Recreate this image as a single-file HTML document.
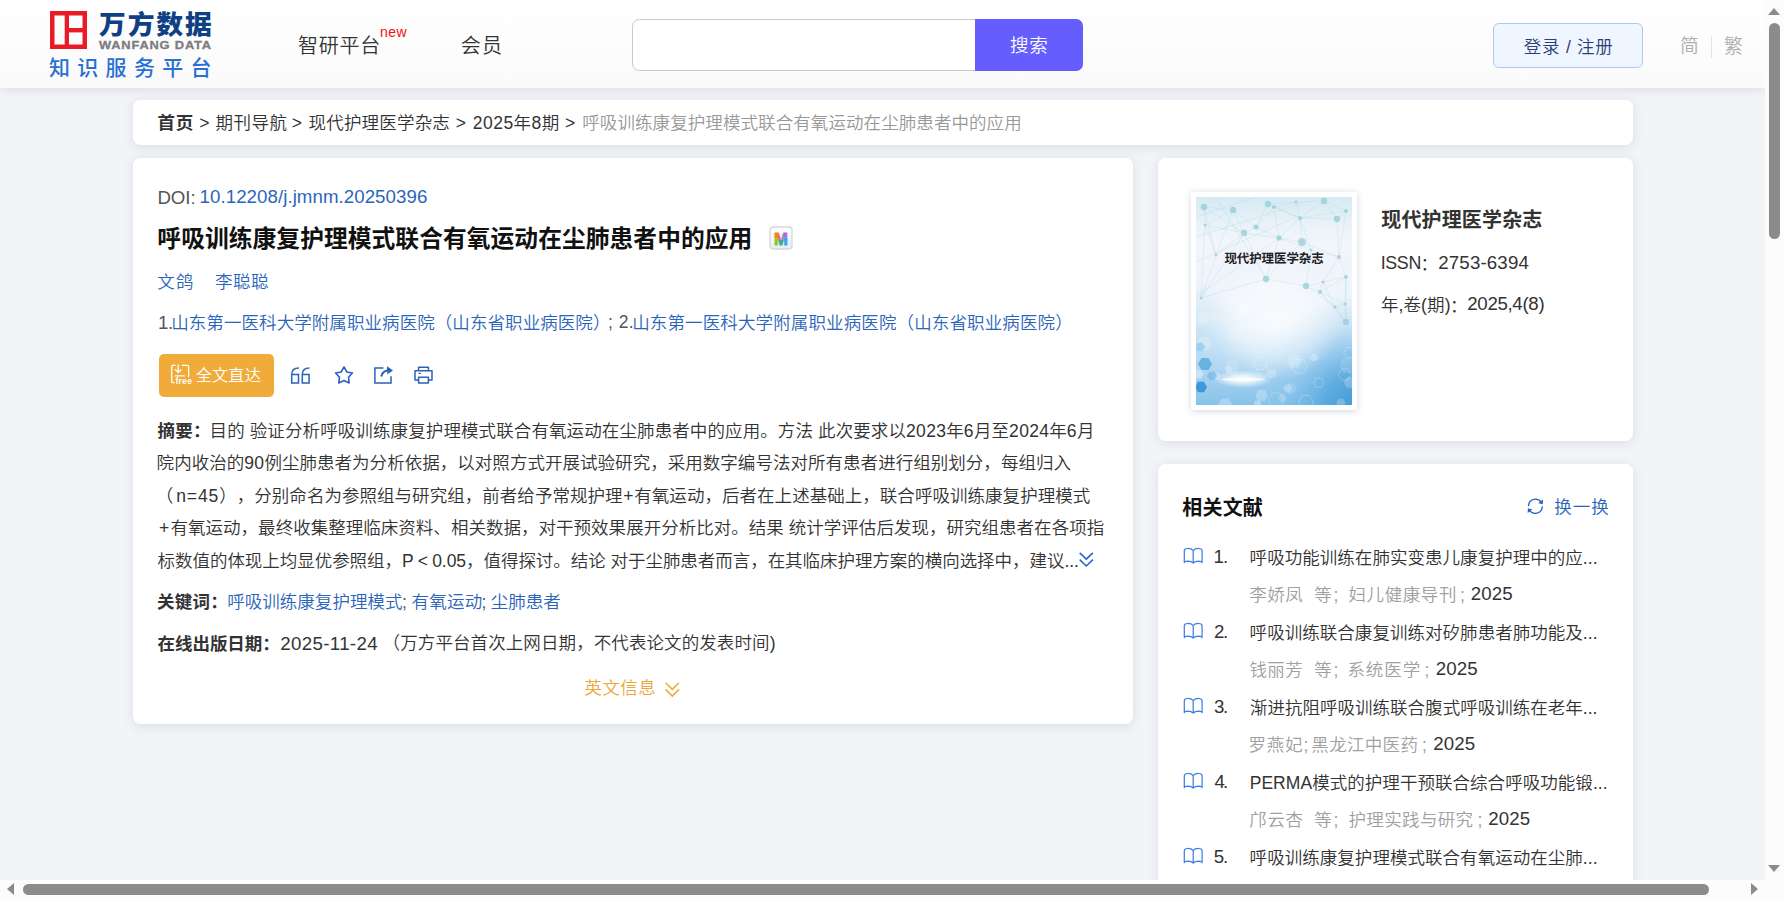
<!DOCTYPE html>
<html lang="zh-CN">
<head>
<meta charset="utf-8">
<title>呼吸训练康复护理模式联合有氧运动在尘肺患者中的应用</title>
<style>
*{box-sizing:border-box;margin:0;padding:0}
html,body{width:1784px;height:899px;overflow:hidden}
body{position:relative;background:#f2f4f8;font-family:"Liberation Sans","Noto Sans CJK SC",sans-serif;color:#333;font-size:17.5px;font-weight:350;text-spacing-trim:space-all}
a{text-decoration:none;color:inherit}
i{font-style:normal}
.abs{position:absolute}
.t{position:absolute;white-space:nowrap;display:block}
.d{letter-spacing:.3px}
/* header */
#hdr{position:absolute;left:0;top:0;width:1765px;height:88px;background:linear-gradient(#fff,#fafafa);box-shadow:0 1px 10px rgba(40,45,60,.13)}
#logo-sq{position:absolute;left:50px;top:11px;width:37px;height:38px}
#logo-cn{position:absolute;left:99px;top:2.6px;font-size:26px;line-height:44px;font-weight:900;color:#0f4083;letter-spacing:1.8px;white-space:nowrap;transform-origin:0 50%;transform:scaleX(1.03)}
#logo-en{position:absolute;left:99px;top:38px;font-size:11.3px;line-height:14px;font-weight:700;color:#7c7d81;letter-spacing:.7px;white-space:nowrap;transform-origin:0 50%;transform:scaleX(1.14);-webkit-text-stroke:.3px #7c7d81}
#logo-sub{position:absolute;left:49px;top:54px;font-size:21px;line-height:28px;font-weight:500;color:#2a6fd3;letter-spacing:7.3px;white-space:nowrap}
#sbox{position:absolute;left:632px;top:19px;width:451px;height:52px;border:1px solid #c9c9c9;border-radius:7.5px;background:#fff}
#sbtn{position:absolute;left:975px;top:19px;width:108px;height:52px;border-radius:0 7px 7px 0;background:#665dff}
#login{position:absolute;left:1493px;top:23px;width:150px;height:45px;border:1px solid #afc8ef;border-radius:6px;background:#f0f6ff}
#langsep{position:absolute;left:1711px;top:36px;width:1px;height:22px;background:#e4e4e4}
/* cards */
.card{position:absolute;background:#fff;border-radius:7.5px;box-shadow:0 2px 12px rgba(30,40,50,.115)}
#crumb{left:133px;top:100px;width:1500px;height:45px}
#main{left:133px;top:158px;width:1000px;height:566px}
#side1{left:1158px;top:158px;width:475px;height:283px}
#side2{left:1158px;top:464px;width:475px;height:440px}
/* scrollbars */
#vsb{position:absolute;left:1765px;top:0;width:19px;height:880px;background:#fcfcfc}
#hsb{position:absolute;left:0;top:880px;width:1784px;height:19px;background:#fcfcfc}
.thumb{position:absolute;background:#8b8b8b;border-radius:6px}
.tri{position:absolute;width:0;height:0}
</style>
</head>
<body>
<div id="hdr">
  <svg id="logo-sq" viewBox="0 0 37 38"><rect x="2.25" y="2.25" width="32.5" height="33.5" fill="none" stroke="#e81c26" stroke-width="4.5"/><rect x="14.7" y="2" width="4.3" height="34" fill="#e81c26"/><rect x="17" y="17" width="17" height="4.4" fill="#e81c26"/></svg>
  <div id="logo-cn">万方数据</div>
  <div id="logo-en">WANFANG DATA</div>
  <div id="logo-sub">知识服务平台</div>
  <div id="sbox"></div>
  <div id="sbtn"></div>
  <div id="login"></div>
  <div id="langsep"></div>
</div>
<div class="card" id="crumb"></div>
<div class="card" id="main"></div>
<div class="card" id="side1"></div>
<div class="card" id="side2"></div>

<!-- cover -->
<div class="abs" style="left:1158px;top:158px"><div class="abs" id="cover" style="left:33px;top:34px;width:166px;height:218px;background:#fff;box-shadow:0 1px 7px rgba(110,130,160,.32)"><svg class="abs" style="left:5px;top:5px" width="156" height="208" viewBox="0 0 156 208"><defs>
<linearGradient id="cg1" x1="0" y1="0" x2="0" y2="1"><stop offset="0" stop-color="#eaf2f9"/><stop offset=".12" stop-color="#f3f6fb"/><stop offset=".5" stop-color="#eef4fb"/><stop offset=".62" stop-color="#e2eff9"/><stop offset=".76" stop-color="#c2e0f5"/><stop offset=".9" stop-color="#9ccdee"/><stop offset="1" stop-color="#86c3ea"/></linearGradient>
<radialGradient id="cg2" cx=".5" cy=".5" r=".5"><stop offset="0" stop-color="#ffffff" stop-opacity=".75"/><stop offset=".6" stop-color="#ffffff" stop-opacity=".38"/><stop offset="1" stop-color="#ffffff" stop-opacity="0"/></radialGradient>
<radialGradient id="cg3" cx=".5" cy=".5" r=".5"><stop offset="0" stop-color="#ffffff" stop-opacity="1"/><stop offset=".4" stop-color="#ffffff" stop-opacity=".7"/><stop offset="1" stop-color="#ffffff" stop-opacity="0"/></radialGradient>
<radialGradient id="cg5" gradientUnits="userSpaceOnUse" cx="170" cy="215" r="120"><stop offset="0" stop-color="#3a94d3" stop-opacity="1"/><stop offset=".35" stop-color="#4ea3dc" stop-opacity=".8"/><stop offset=".7" stop-color="#7dbde8" stop-opacity=".3"/><stop offset="1" stop-color="#8cc6ea" stop-opacity="0"/></radialGradient>
<radialGradient id="cg6" gradientUnits="userSpaceOnUse" cx="-15" cy="140" r="60"><stop offset="0" stop-color="#9fd0ee" stop-opacity=".45"/><stop offset="1" stop-color="#9fd0ee" stop-opacity="0"/></radialGradient>
<linearGradient id="cg4" x1="0" y1="0" x2="0" y2="1"><stop offset="0" stop-color="#c6e4ee" stop-opacity=".55"/><stop offset="1" stop-color="#c6e4ee" stop-opacity="0"/></linearGradient>
</defs><rect width="156" height="208" fill="url(#cg1)"/><rect width="156" height="208" fill="url(#cg5)"/><rect width="156" height="208" fill="url(#cg6)"/><rect width="156" height="45" fill="url(#cg4)"/><ellipse cx="80" cy="124" rx="66" ry="58" fill="url(#cg2)"/><line x1="8" y1="10" x2="37" y2="13" stroke="#a5d3dd" stroke-width=".6" opacity=".42"/><line x1="8" y1="10" x2="9" y2="28" stroke="#a5d3dd" stroke-width=".6" opacity=".42"/><line x1="8" y1="10" x2="48" y2="36" stroke="#a5d3dd" stroke-width=".6" opacity=".42"/><line x1="8" y1="10" x2="20" y2="58" stroke="#a5d3dd" stroke-width=".6" opacity=".42"/><line x1="37" y1="13" x2="9" y2="28" stroke="#a5d3dd" stroke-width=".6" opacity=".42"/><line x1="37" y1="13" x2="48" y2="36" stroke="#a5d3dd" stroke-width=".6" opacity=".42"/><line x1="37" y1="13" x2="20" y2="58" stroke="#a5d3dd" stroke-width=".6" opacity=".42"/><line x1="37" y1="13" x2="60" y2="30" stroke="#a5d3dd" stroke-width=".6" opacity=".42"/><line x1="72" y1="7" x2="78" y2="10" stroke="#a5d3dd" stroke-width=".6" opacity=".42"/><line x1="72" y1="7" x2="104" y2="21" stroke="#a5d3dd" stroke-width=".6" opacity=".42"/><line x1="72" y1="7" x2="100" y2="5" stroke="#a5d3dd" stroke-width=".6" opacity=".42"/><line x1="72" y1="7" x2="60" y2="30" stroke="#a5d3dd" stroke-width=".6" opacity=".42"/><line x1="78" y1="10" x2="104" y2="21" stroke="#a5d3dd" stroke-width=".6" opacity=".42"/><line x1="78" y1="10" x2="83" y2="41" stroke="#a5d3dd" stroke-width=".6" opacity=".42"/><line x1="78" y1="10" x2="100" y2="5" stroke="#a5d3dd" stroke-width=".6" opacity=".42"/><line x1="78" y1="10" x2="60" y2="30" stroke="#a5d3dd" stroke-width=".6" opacity=".42"/><line x1="104" y1="21" x2="141" y2="22" stroke="#a5d3dd" stroke-width=".6" opacity=".42"/><line x1="104" y1="21" x2="150" y2="14" stroke="#a5d3dd" stroke-width=".6" opacity=".42"/><line x1="104" y1="21" x2="83" y2="41" stroke="#a5d3dd" stroke-width=".6" opacity=".42"/><line x1="104" y1="21" x2="106" y2="45" stroke="#a5d3dd" stroke-width=".6" opacity=".42"/><line x1="104" y1="21" x2="115" y2="53" stroke="#a5d3dd" stroke-width=".6" opacity=".42"/><line x1="104" y1="21" x2="100" y2="5" stroke="#a5d3dd" stroke-width=".6" opacity=".42"/><line x1="104" y1="21" x2="128" y2="4" stroke="#a5d3dd" stroke-width=".6" opacity=".42"/><line x1="141" y1="22" x2="150" y2="14" stroke="#a5d3dd" stroke-width=".6" opacity=".42"/><line x1="141" y1="22" x2="143" y2="60" stroke="#a5d3dd" stroke-width=".6" opacity=".42"/><line x1="141" y1="22" x2="128" y2="4" stroke="#a5d3dd" stroke-width=".6" opacity=".42"/><line x1="150" y1="14" x2="143" y2="60" stroke="#a5d3dd" stroke-width=".6" opacity=".42"/><line x1="150" y1="14" x2="128" y2="4" stroke="#a5d3dd" stroke-width=".6" opacity=".42"/><line x1="9" y1="28" x2="48" y2="36" stroke="#a5d3dd" stroke-width=".6" opacity=".42"/><line x1="9" y1="28" x2="20" y2="58" stroke="#a5d3dd" stroke-width=".6" opacity=".42"/><line x1="9" y1="28" x2="5" y2="101" stroke="#a5d3dd" stroke-width=".6" opacity=".42"/><line x1="48" y1="36" x2="83" y2="41" stroke="#a5d3dd" stroke-width=".6" opacity=".42"/><line x1="48" y1="36" x2="20" y2="58" stroke="#a5d3dd" stroke-width=".6" opacity=".42"/><line x1="48" y1="36" x2="70" y2="82" stroke="#a5d3dd" stroke-width=".6" opacity=".42"/><line x1="48" y1="36" x2="5" y2="101" stroke="#a5d3dd" stroke-width=".6" opacity=".42"/><line x1="48" y1="36" x2="60" y2="30" stroke="#a5d3dd" stroke-width=".6" opacity=".42"/><line x1="83" y1="41" x2="106" y2="45" stroke="#a5d3dd" stroke-width=".6" opacity=".42"/><line x1="83" y1="41" x2="115" y2="53" stroke="#a5d3dd" stroke-width=".6" opacity=".42"/><line x1="83" y1="41" x2="70" y2="82" stroke="#a5d3dd" stroke-width=".6" opacity=".42"/><line x1="83" y1="41" x2="60" y2="30" stroke="#a5d3dd" stroke-width=".6" opacity=".42"/><line x1="106" y1="45" x2="115" y2="53" stroke="#a5d3dd" stroke-width=".6" opacity=".42"/><line x1="106" y1="45" x2="70" y2="82" stroke="#a5d3dd" stroke-width=".6" opacity=".42"/><line x1="106" y1="45" x2="143" y2="60" stroke="#a5d3dd" stroke-width=".6" opacity=".42"/><line x1="115" y1="53" x2="110" y2="89" stroke="#a5d3dd" stroke-width=".6" opacity=".42"/><line x1="115" y1="53" x2="143" y2="60" stroke="#a5d3dd" stroke-width=".6" opacity=".42"/><line x1="20" y1="58" x2="5" y2="101" stroke="#a5d3dd" stroke-width=".6" opacity=".42"/><line x1="70" y1="82" x2="110" y2="89" stroke="#a5d3dd" stroke-width=".6" opacity=".42"/><line x1="70" y1="82" x2="5" y2="101" stroke="#a5d3dd" stroke-width=".6" opacity=".42"/><line x1="110" y1="89" x2="124" y2="95" stroke="#a5d3dd" stroke-width=".6" opacity=".42"/><line x1="110" y1="89" x2="127" y2="85" stroke="#a5d3dd" stroke-width=".6" opacity=".42"/><line x1="110" y1="89" x2="139" y2="110" stroke="#a5d3dd" stroke-width=".6" opacity=".42"/><line x1="124" y1="95" x2="127" y2="85" stroke="#a5d3dd" stroke-width=".6" opacity=".42"/><line x1="124" y1="95" x2="139" y2="110" stroke="#a5d3dd" stroke-width=".6" opacity=".42"/><line x1="124" y1="95" x2="149" y2="107" stroke="#a5d3dd" stroke-width=".6" opacity=".42"/><line x1="124" y1="95" x2="150" y2="80" stroke="#a5d3dd" stroke-width=".6" opacity=".42"/><line x1="124" y1="95" x2="150" y2="125" stroke="#a5d3dd" stroke-width=".6" opacity=".42"/><line x1="127" y1="85" x2="139" y2="110" stroke="#a5d3dd" stroke-width=".6" opacity=".42"/><line x1="127" y1="85" x2="143" y2="60" stroke="#a5d3dd" stroke-width=".6" opacity=".42"/><line x1="127" y1="85" x2="150" y2="80" stroke="#a5d3dd" stroke-width=".6" opacity=".42"/><line x1="139" y1="110" x2="149" y2="107" stroke="#a5d3dd" stroke-width=".6" opacity=".42"/><line x1="139" y1="110" x2="150" y2="125" stroke="#a5d3dd" stroke-width=".6" opacity=".42"/><line x1="149" y1="107" x2="150" y2="80" stroke="#a5d3dd" stroke-width=".6" opacity=".42"/><line x1="149" y1="107" x2="150" y2="125" stroke="#a5d3dd" stroke-width=".6" opacity=".42"/><line x1="143" y1="60" x2="150" y2="80" stroke="#a5d3dd" stroke-width=".6" opacity=".42"/><line x1="150" y1="80" x2="150" y2="125" stroke="#a5d3dd" stroke-width=".6" opacity=".42"/><line x1="100" y1="5" x2="128" y2="4" stroke="#a5d3dd" stroke-width=".6" opacity=".42"/><line x1="0" y1="40" x2="110" y2="5" stroke="#a5d3dd" stroke-width=".6" opacity=".42"/><line x1="0" y1="65" x2="100" y2="20" stroke="#a5d3dd" stroke-width=".6" opacity=".42"/><line x1="0" y1="100" x2="83" y2="41" stroke="#a5d3dd" stroke-width=".6" opacity=".42"/><line x1="0" y1="20" x2="60" y2="0" stroke="#a5d3dd" stroke-width=".6" opacity=".42"/><line x1="20" y1="0" x2="70" y2="82" stroke="#a5d3dd" stroke-width=".6" opacity=".42"/><circle cx="8" cy="10" r="3.2" fill="#97cfd9" opacity=".8"/><circle cx="37" cy="13" r="3.2" fill="#97cfd9" opacity=".8"/><circle cx="72" cy="7" r="3.2" fill="#97cfd9" opacity=".8"/><circle cx="78" cy="10" r="2" fill="#97cfd9" opacity=".8"/><circle cx="104" cy="21" r="2" fill="#97cfd9" opacity=".8"/><circle cx="141" cy="22" r="3.2" fill="#97cfd9" opacity=".8"/><circle cx="150" cy="14" r="2" fill="#97cfd9" opacity=".8"/><circle cx="9" cy="28" r="1.5" fill="#97cfd9" opacity=".8"/><circle cx="48" cy="36" r="3.2" fill="#97cfd9" opacity=".8"/><circle cx="83" cy="41" r="2.6" fill="#97cfd9" opacity=".8"/><circle cx="106" cy="45" r="2" fill="#97cfd9" opacity=".8"/><circle cx="115" cy="53" r="1.5" fill="#97cfd9" opacity=".8"/><circle cx="20" cy="58" r="1.5" fill="#97cfd9" opacity=".8"/><circle cx="70" cy="82" r="3.2" fill="#97cfd9" opacity=".8"/><circle cx="110" cy="89" r="3.2" fill="#97cfd9" opacity=".8"/><circle cx="124" cy="95" r="2" fill="#97cfd9" opacity=".8"/><circle cx="127" cy="85" r="1.5" fill="#97cfd9" opacity=".8"/><circle cx="5" cy="101" r="1.5" fill="#97cfd9" opacity=".8"/><circle cx="139" cy="110" r="1.5" fill="#97cfd9" opacity=".8"/><circle cx="149" cy="107" r="1.5" fill="#97cfd9" opacity=".8"/><circle cx="143" cy="60" r="2" fill="#97cfd9" opacity=".8"/><circle cx="150" cy="80" r="2" fill="#97cfd9" opacity=".8"/><circle cx="100" cy="5" r="1.5" fill="#97cfd9" opacity=".8"/><circle cx="128" cy="4" r="3.2" fill="#97cfd9" opacity=".8"/><circle cx="60" cy="30" r="2.6" fill="#97cfd9" opacity=".8"/><circle cx="150" cy="125" r="3.2" fill="#97cfd9" opacity=".8"/><circle cx="106" cy="45" r="4.2" fill="#a5d6de" opacity=".85"/><polygon points="40.5,138.8 38.5,142.3 34.4,142.3 32.4,138.8 34.4,135.3 38.5,135.3" fill="#ffffff" opacity="0.14"/><polygon points="90.4,201.3 88.2,205.1 83.8,205.1 81.6,201.3 83.8,197.5 88.2,197.5" fill="#ffffff" opacity="0.19"/><polygon points="122.4,160.3 120.3,163.9 116.2,163.9 114.1,160.3 116.2,156.7 120.3,156.7" fill="#ffffff" opacity="0.27"/><polygon points="22.3,120.6 19.6,125.3 14.1,125.3 11.4,120.6 14.1,115.8 19.6,115.8" fill="#ffffff" opacity="0.14"/><polygon points="7.7,177.1 5.2,181.5 0.1,181.5 -2.4,177.1 0.1,172.7 5.2,172.7" fill="#ffffff" opacity="0.36"/><polygon points="15.7,146.8 11.9,153.3 4.4,153.3 0.6,146.8 4.4,140.3 11.9,140.3" fill="#ffffff" opacity="0.23"/><polygon points="54.6,111.5 51.6,116.7 45.5,116.7 42.5,111.5 45.5,106.2 51.6,106.2" fill="#ffffff" opacity="0.36"/><polygon points="25.1,179.3 23.0,182.8 19.0,182.8 16.9,179.3 19.0,175.8 23.0,175.8" fill="#ffffff" opacity="0.24"/><polygon points="80.9,176.8 78.4,181.1 73.5,181.1 71.0,176.8 73.5,172.6 78.4,172.6" fill="#ffffff" opacity="0.25"/><polygon points="159.8,185.4 156.8,190.7 150.7,190.7 147.6,185.4 150.7,180.1 156.8,180.1" fill="#ffffff" opacity="0.22"/><polygon points="65.6,207.0 63.6,210.5 59.6,210.5 57.6,207.0 59.6,203.6 63.6,203.6" fill="#ffffff" opacity="0.34"/><polygon points="161.1,168.1 156.6,175.9 147.6,175.9 143.1,168.1 147.6,160.3 156.6,160.3" fill="#ffffff" opacity="0.13"/><polygon points="36.2,207.6 32.7,213.7 25.7,213.7 22.2,207.6 25.7,201.5 32.7,201.5" fill="#ffffff" opacity="0.27"/><polygon points="12.8,124.3 9.7,129.7 3.5,129.7 0.4,124.3 3.5,119.0 9.7,119.0" fill="#ffffff" opacity="0.12"/><polygon points="101.1,191.4 98.2,196.5 92.2,196.5 89.3,191.4 92.2,186.2 98.2,186.2" fill="#ffffff" opacity="0.14"/><polygon points="36.6,172.4 34.6,175.9 30.5,175.9 28.5,172.4 30.5,168.9 34.6,168.9" fill="#ffffff" opacity="0.22"/><polygon points="96.3,191.6 94.0,195.6 89.3,195.6 86.9,191.6 89.3,187.5 94.0,187.5" fill="#ffffff" opacity="0.22"/><polygon points="43.3,169.8 39.4,176.4 31.8,176.4 28.0,169.8 31.8,163.2 39.4,163.2" fill="#ffffff" opacity="0.16"/><polygon points="105.6,164.3 101.8,170.7 94.4,170.7 90.7,164.3 94.4,157.8 101.8,157.8" fill="#ffffff" opacity="0.22"/><polygon points="14.0,120.7 10.7,126.4 4.1,126.4 0.8,120.7 4.1,115.0 10.7,115.0" fill="#ffffff" opacity="0.19"/><polygon points="72.1,198.7 68.9,204.3 62.4,204.3 59.2,198.7 62.4,193.1 68.9,193.1" fill="#ffffff" opacity="0.26"/><polygon points="149.6,205.8 147.3,209.8 142.6,209.8 140.3,205.8 142.6,201.8 147.3,201.8" fill="#ffffff" opacity="0.24"/><polygon points="128.0,185.7 125.4,190.3 120.1,190.3 117.4,185.7 120.1,181.1 125.4,181.1" fill="none" stroke="#ffffff" stroke-width=".7" opacity=".35"/><polygon points="88.4,203.1 84.4,210.0 76.4,210.0 72.4,203.1 76.4,196.1 84.4,196.1" fill="none" stroke="#ffffff" stroke-width=".7" opacity=".35"/><polygon points="72.6,173.9 69.6,179.1 63.6,179.1 60.6,173.9 63.6,168.7 69.6,168.7" fill="none" stroke="#ffffff" stroke-width=".7" opacity=".35"/><polygon points="71.6,166.4 68.0,172.5 60.9,172.5 57.3,166.4 60.9,160.2 68.0,160.2" fill="none" stroke="#ffffff" stroke-width=".7" opacity=".35"/><polygon points="159.0,155.3 156.2,160.2 150.6,160.2 147.9,155.3 150.6,150.5 156.2,150.5" fill="none" stroke="#ffffff" stroke-width=".7" opacity=".35"/><polygon points="111.2,169.2 107.2,176.1 99.3,176.1 95.3,169.2 99.3,162.3 107.2,162.3" fill="none" stroke="#ffffff" stroke-width=".7" opacity=".35"/><polygon points="117.5,204.9 113.8,211.3 106.4,211.3 102.7,204.9 106.4,198.5 113.8,198.5" fill="none" stroke="#ffffff" stroke-width=".7" opacity=".35"/><polygon points="155.1,177.5 151.9,183.1 145.4,183.1 142.2,177.5 145.4,172.0 151.9,172.0" fill="none" stroke="#ffffff" stroke-width=".7" opacity=".35"/><polygon points="11.0,190.0 8.0,195.2 2.0,195.2 -1.0,190.0 2.0,184.8 8.0,184.8" fill="#2f8fd4" opacity="0.85"/><polygon points="16.0,167.0 12.5,173.1 5.5,173.1 2.0,167.0 5.5,160.9 12.5,160.9" fill="#4aa4dd" opacity="0.7"/><polygon points="9.0,150.0 6.5,154.3 1.5,154.3 -1.0,150.0 1.5,145.7 6.5,145.7" fill="#8fc8ec" opacity="0.7"/><polygon points="21.0,179.0 18.5,183.3 13.5,183.3 11.0,179.0 13.5,174.7 18.5,174.7" fill="#6db6e6" opacity="0.6"/><ellipse cx="47" cy="182" rx="30" ry="9" fill="url(#cg3)"/><ellipse cx="47" cy="182.5" rx="22" ry="1.6" fill="#fff" opacity=".75"/><text x="78" y="65.8" text-anchor="middle" font-family="Liberation Sans, Noto Sans CJK SC, sans-serif" font-weight="700" font-size="12.5" fill="#222" letter-spacing="-.1">现代护理医学杂志</text></svg></div></div>

<!-- M icon -->
<svg class="abs" id="micon" style="left:769px;top:226px" width="24" height="24" viewBox="0 0 24 24">
  <defs>
    <linearGradient id="mbg" x1="0" y1="0" x2="0" y2="1"><stop offset="0" stop-color="#ffffff"/><stop offset="1" stop-color="#e4edf9"/></linearGradient>
    <pattern id="mfg" patternUnits="userSpaceOnUse" x="0" y="0" width="24" height="24">
      <rect x="0" y="0" width="9.2" height="12.6" fill="#f7821d"/><rect x="0" y="12.6" width="9.2" height="12" fill="#8cc82c"/>
      <rect x="9.2" y="0" width="3.2" height="13.5" fill="#e8604a"/><rect x="9.2" y="13.5" width="5.6" height="11" fill="#4aa58c"/>
      <rect x="12.4" y="0" width="2.4" height="13.5" fill="#9a7fc0"/>
      <rect x="14.8" y="0" width="10" height="11.6" fill="#b266da"/><rect x="14.8" y="11.6" width="10" height="13" fill="#3f9fe8"/>
    </pattern>
  </defs>
  <rect x="1" y="1" width="22" height="22" rx="3.2" fill="url(#mbg)" stroke="#d6d6d6" stroke-width="1.3"/>
  <text x="12" y="18.7" text-anchor="middle" font-family="Liberation Sans, sans-serif" font-weight="700" font-size="16.6" fill="url(#mfg)" stroke="url(#mfg)" stroke-width="1" stroke-linejoin="round">M</text>
</svg>

<!-- full text button -->
<div class="abs" id="ftbtn" style="left:159px;top:354px;width:115px;height:43px;border-radius:5px;background:#f0ab3a"></div>
<!--ICONS--><svg class="abs" style="left:170px;top:364px" width="24" height="22" viewBox="170 364 24 22"><g fill="none" stroke="#fff" stroke-width="1.3" stroke-linecap="round" stroke-linejoin="round"><path d="M175.1 365.4 H172.9 Q171.7 365.4 171.7 366.6 V381.4 Q171.7 382.6 172.9 382.6 H174"/><path d="M182.2 365.4 H187.4 Q188.6 365.4 188.6 366.6 V376.4"/><path d="M178.2 365.2 V372.3 M175.4 369.8 L178.2 372.6 L181 369.8"/><path d="M175.3 375.9 H184.2"/></g><text x="175.4" y="384" font-family="Liberation Sans, sans-serif" font-weight="700" font-size="8.6" fill="#fff" letter-spacing=".25">free</text></svg>
<svg class="abs" style="left:289px;top:365px" width="23" height="21" viewBox="289 365 23 21"><g fill="none" stroke="#2a62ba" stroke-width="1.5" stroke-linejoin="miter"><path d="M298.9 367.9 Q291.7 367.9 291.7 374.6 V382.9 H298.5 V374.6 H291.7"/><path d="M309.5 367.9 Q302.3 367.9 302.3 374.6 V382.9 H309.1 V374.6 H302.3"/></g></svg>
<svg class="abs" style="left:333px;top:364px" width="22" height="22" viewBox="333 364 22 22"><polygon points="344.00,367.00 346.82,371.92 352.37,373.08 348.57,377.28 349.17,382.92 344.00,380.60 338.83,382.92 339.43,377.28 335.63,373.08 341.18,371.92" fill="none" stroke="#2a62ba" stroke-width="1.6" stroke-linejoin="round"/></svg>
<svg class="abs" style="left:372px;top:364px" width="23" height="22" viewBox="372 364 23 22"><g fill="none" stroke="#2a62ba" stroke-width="1.5" stroke-linejoin="miter"><path d="M383.4 367.9 H374.9 V383 H391 V376.3"/><path d="M381.5 375.8 Q382.9 370.8 388 370.5" stroke-width="2" stroke-linecap="round"/></g><path d="M387 366.2 L393 370.5 L387 374.6 L387.6 371.6 L386.9 369.4 Z" fill="#2a62ba"/></svg>
<svg class="abs" style="left:413px;top:365px" width="22" height="21" viewBox="413 365 22 21"><g fill="none" stroke="#2a62ba" stroke-width="1.5" stroke-linejoin="round"><path d="M418.6 370.6 V367.2 H428.4 V370.6"/><path d="M418.6 380 H415 V370.8 H432 V380 H428.4"/><rect x="418.6" y="377.2" width="9.8" height="5.8" fill="#fff"/></g><rect x="418.4" y="372.8" width="2.4" height="1.2" fill="#2a62ba"/></svg>
<svg class="abs" style="left:1078px;top:551px" width="17" height="17" viewBox="1078 551 17 17"><g fill="none" stroke="#2a66c4" stroke-width="1.6"><path d="M1079.7 552.9 L1086.3 559.2 L1092.9 552.9"/><path d="M1079.7 559.7 L1086.3 566 L1092.9 559.7"/></g></svg>
<svg class="abs" style="left:664px;top:681px" width="17" height="17" viewBox="664 681 17 17"><g fill="none" stroke="#eeaa3c" stroke-width="1.5"><path d="M665.6 682.7 L672.3 689.4 L679 682.7"/><path d="M665.6 689.4 L672.3 696.1 L679 689.4"/></g></svg>
<svg class="abs" style="left:1526px;top:497px" width="19" height="19" viewBox="1526 497 19 19"><g fill="none" stroke="#2a62ba" stroke-width="1.35" stroke-linecap="round"><path d="M1528.5 505.6 A6.9 6.9 0 0 1 1541.3 502.6"/><path d="M1542.2 507 A6.9 6.9 0 0 1 1529.4 510"/></g><path d="M1543 499.6 L1542.8 504.3 L1538.4 503.2 Z" fill="#2a62ba"/><path d="M1527.7 513 L1527.9 508.3 L1532.3 509.4 Z" fill="#2a62ba"/></svg>
<svg class="abs" style="left:1182px;top:546px" width="23" height="20" viewBox="1182 546 23 20"><path d="M1184.3 562.6 V551 Q1184.3 548.6 1187.6 548.5 Q1191.5 548.4 1193.2 550.6 Q1194.9 548.4 1198.8 548.5 Q1202.1 548.6 1202.1 551 V562.6 Q1202 561.2 1198.4 561.1 Q1195 561.1 1193.2 563 Q1191.4 561.1 1188 561.1 Q1184.4 561.2 1184.3 562.6 Z M1193.2 550.6 V562.8" fill="none" stroke="#3f80e2" stroke-width="1.25" stroke-linejoin="round"/></svg>
<svg class="abs" style="left:1182px;top:621px" width="23" height="20" viewBox="1182 546 23 20"><path d="M1184.3 562.6 V551 Q1184.3 548.6 1187.6 548.5 Q1191.5 548.4 1193.2 550.6 Q1194.9 548.4 1198.8 548.5 Q1202.1 548.6 1202.1 551 V562.6 Q1202 561.2 1198.4 561.1 Q1195 561.1 1193.2 563 Q1191.4 561.1 1188 561.1 Q1184.4 561.2 1184.3 562.6 Z M1193.2 550.6 V562.8" fill="none" stroke="#3f80e2" stroke-width="1.25" stroke-linejoin="round"/></svg>
<svg class="abs" style="left:1182px;top:696px" width="23" height="20" viewBox="1182 546 23 20"><path d="M1184.3 562.6 V551 Q1184.3 548.6 1187.6 548.5 Q1191.5 548.4 1193.2 550.6 Q1194.9 548.4 1198.8 548.5 Q1202.1 548.6 1202.1 551 V562.6 Q1202 561.2 1198.4 561.1 Q1195 561.1 1193.2 563 Q1191.4 561.1 1188 561.1 Q1184.4 561.2 1184.3 562.6 Z M1193.2 550.6 V562.8" fill="none" stroke="#3f80e2" stroke-width="1.25" stroke-linejoin="round"/></svg>
<svg class="abs" style="left:1182px;top:771px" width="23" height="20" viewBox="1182 546 23 20"><path d="M1184.3 562.6 V551 Q1184.3 548.6 1187.6 548.5 Q1191.5 548.4 1193.2 550.6 Q1194.9 548.4 1198.8 548.5 Q1202.1 548.6 1202.1 551 V562.6 Q1202 561.2 1198.4 561.1 Q1195 561.1 1193.2 563 Q1191.4 561.1 1188 561.1 Q1184.4 561.2 1184.3 562.6 Z M1193.2 550.6 V562.8" fill="none" stroke="#3f80e2" stroke-width="1.25" stroke-linejoin="round"/></svg>
<svg class="abs" style="left:1182px;top:846px" width="23" height="20" viewBox="1182 546 23 20"><path d="M1184.3 562.6 V551 Q1184.3 548.6 1187.6 548.5 Q1191.5 548.4 1193.2 550.6 Q1194.9 548.4 1198.8 548.5 Q1202.1 548.6 1202.1 551 V562.6 Q1202 561.2 1198.4 561.1 Q1195 561.1 1193.2 563 Q1191.4 561.1 1188 561.1 Q1184.4 561.2 1184.3 562.6 Z M1193.2 550.6 V562.8" fill="none" stroke="#3f80e2" stroke-width="1.25" stroke-linejoin="round"/></svg><!--/ICONS-->

<span class="t" id="n1" style="left:297.96px;top:30.00px;font-size:20px;line-height:32.0px;color:#333;letter-spacing:0.752px;">智研平台</span>
<span class="t" id="nw" style="left:380.00px;top:21.00px;font-size:14px;line-height:22.4px;color:#f50f0f;letter-spacing:0.413px;">new</span>
<span class="t" id="n2" style="left:460.79px;top:30.00px;font-size:20px;line-height:32.0px;color:#333;letter-spacing:1.233px;">会员</span>
<span class="t" id="sb" style="left:1010.08px;top:31.19px;font-size:18.5px;line-height:29.6px;color:#fff;letter-spacing:0.778px;">搜索</span>
<span class="t" id="lg" style="left:1523.79px;top:32.75px;font-size:17.5px;line-height:28.0px;color:#2d3d75;letter-spacing:0.747px;">登录 / 注册</span>
<span class="t" id="l1" style="left:1679.91px;top:31.53px;font-size:18.75px;line-height:30.0px;color:#adadad;">简</span>
<span class="t" id="l2" style="left:1723.94px;top:31.92px;font-size:18.75px;line-height:30.0px;color:#adadad;">繁</span>
<span class="t" id="c1" style="left:157.54px;top:109.30px;font-size:17.5px;line-height:28.0px;color:#333;letter-spacing:0.686px;font-weight:700;">首页</span>
<span class="t" id="c2" style="left:199.16px;top:109.40px;font-size:17.5px;line-height:28.0px;color:#333;">&gt;</span>
<span class="t" id="c3" style="left:215.53px;top:109.16px;font-size:17.5px;line-height:28.0px;color:#333;letter-spacing:0.507px;">期刊导航</span>
<span class="t" id="c4" style="left:291.78px;top:109.05px;font-size:17.5px;line-height:28.0px;color:#333;">&gt;</span>
<span class="t" id="c5" style="left:308.58px;top:108.77px;font-size:17.5px;line-height:28.0px;color:#333;letter-spacing:0.181px;">现代护理医学杂志</span>
<span class="t" id="c6" style="left:455.78px;top:109.05px;font-size:17.5px;line-height:28.0px;color:#333;">&gt;</span>
<span class="t" id="c7" style="left:472.78px;top:108.98px;font-size:17.5px;line-height:28.0px;color:#333;letter-spacing:0.472px;">2025年8期</span>
<span class="t" id="c8" style="left:564.94px;top:109.46px;font-size:17.5px;line-height:28.0px;color:#333;">&gt;</span>
<span class="t" id="c9" style="left:582.29px;top:109.02px;font-size:17.5px;line-height:28.0px;color:#999;letter-spacing:0.080px;">呼吸训练康复护理模式联合有氧运动在尘肺患者中的应用</span>
<span class="t" id="d1" style="left:157.43px;top:183.00px;font-size:18.7px;line-height:29.92px;color:#555;letter-spacing:-0.083px;">DOI:</span>
<span class="t" id="d2" style="left:199.59px;top:182.00px;font-size:18.7px;line-height:29.92px;color:#2b65bb;letter-spacing:0.052px;">10.12208/j.jmnm.20250396</span>
<span class="t" id="tt" style="left:157.37px;top:220.30px;font-size:23.75px;line-height:38.0px;color:#111;letter-spacing:0.049px;font-weight:700;">呼吸训练康复护理模式联合有氧运动在尘肺患者中的应用</span>
<span class="t" id="a1" style="left:157.20px;top:268.00px;font-size:17.5px;line-height:28.0px;color:#2b65bb;letter-spacing:1.005px;">文鸽</span>
<span class="t" id="a2" style="left:214.90px;top:268.00px;font-size:17.5px;line-height:28.0px;color:#2b65bb;letter-spacing:0.539px;">李聪聪</span>
<span class="t" id="f1" style="left:157.93px;top:308.00px;font-size:18.7px;line-height:29.92px;color:#555;letter-spacing:-0.335px;">1.</span>
<span class="t" id="f2" style="left:171.20px;top:309.00px;font-size:17.5px;line-height:28.0px;color:#2b65bb;letter-spacing:0.073px;">山东第一医科大学附属职业病医院（山东省职业病医院）</span>
<span class="t" id="f3" style="left:607.98px;top:308.00px;font-size:17.5px;line-height:28.0px;color:#555;letter-spacing:0.482px;">; 2.</span>
<span class="t" id="f4" style="left:632.20px;top:309.00px;font-size:17.5px;line-height:28.0px;color:#2b65bb;letter-spacing:0.123px;">山东第一医科大学附属职业病医院（山东省职业病医院）</span>
<span class="t" id="bt" style="left:195.81px;top:362.00px;font-size:16.25px;line-height:26.0px;color:#fff;letter-spacing:0.030px;">全文直达</span>
<span class="t" id="s0" style="left:157.62px;top:417.00px;font-size:17.5px;line-height:28.0px;color:#333;letter-spacing:0.166px;font-weight:700;">摘要：</span>
<span class="t" id="s1" style="left:209.55px;top:416.77px;font-size:17.5px;line-height:28.0px;color:#333;letter-spacing:0.105px;">目的 验证分析呼吸训练康复护理模式联合有氧运动在尘肺患者中的应用。方法 此次要求以<i class="d">2023</i>年<i class="d">6</i>月至<i class="d">2024</i>年<i class="d">6</i>月</span>
<span class="t" id="s2" style="left:156.62px;top:448.86px;font-size:17.5px;line-height:28.0px;color:#333;letter-spacing:0.036px;">院内收治的<i class="d">90</i>例尘肺患者为分析依据，以对照方式开展试验研究，采用数字编号法对所有患者进行组别划分，每组归入</span>
<span class="t" id="s3" style="left:155.83px;top:481.64px;font-size:17.5px;line-height:28.0px;color:#333;letter-spacing:0.038px;">（<i class="d" style="letter-spacing:.9px;margin-left:2.8px">n=45</i>），分别命名为参照组与研究组，前者给予常规护理<i class="d" style="margin:0 .6px">+</i>有氧运动，后者在上述基础上，联合呼吸训练康复护理模式</span>
<span class="t" id="s4" style="left:158.39px;top:514.26px;font-size:17.5px;line-height:28.0px;color:#333;letter-spacing:0.025px;"><i class="d" style="margin:0 1px 0 .6px">+</i>有氧运动，最终收集整理临床资料、相关数据，对干预效果展开分析比对。结果 统计学评估后发现，研究组患者在各项指</span>
<span class="t" id="s5" style="left:157.57px;top:547.26px;font-size:17.5px;line-height:28.0px;color:#333;letter-spacing:-0.043px;">标数值的体现上均显优参照组，P<i style="margin:0 4.2px">&lt;</i>0.05，值得探讨。结论 对于尘肺患者而言，在其临床护理方案的横向选择中，建议...</span>
<span class="t" id="k0" style="left:156.96px;top:587.75px;font-size:17.5px;line-height:28.0px;color:#333;letter-spacing:0.264px;font-weight:700;">关键词：</span>
<span class="t" id="k1" style="left:227.14px;top:587.88px;font-size:17.5px;line-height:28.0px;color:#2b65bb;letter-spacing:0.048px;">呼吸训练康复护理模式</span>
<span class="t" id="k2" style="left:401.93px;top:588.08px;font-size:17.5px;line-height:28.0px;color:#555;">;</span>
<span class="t" id="k3" style="left:411.54px;top:588.05px;font-size:17.5px;line-height:28.0px;color:#2b65bb;letter-spacing:0.198px;">有氧运动</span>
<span class="t" id="k4" style="left:481.51px;top:587.90px;font-size:17.5px;line-height:28.0px;color:#555;">;</span>
<span class="t" id="k5" style="left:490.66px;top:587.88px;font-size:17.5px;line-height:28.0px;color:#2b65bb;letter-spacing:-0.006px;">尘肺患者</span>
<span class="t" id="p0" style="left:157.53px;top:630.30px;font-size:17.5px;line-height:28.0px;color:#333;letter-spacing:-0.038px;font-weight:700;">在线出版日期：</span>
<span class="t" id="p1" style="left:280.30px;top:629.00px;font-size:18.7px;line-height:29.92px;color:#333;letter-spacing:0.338px;">2025-11-24</span>
<span class="t" id="p2" style="left:382.61px;top:629.00px;font-size:17.5px;line-height:28.0px;color:#333;letter-spacing:0.093px;">（万方平台首次上网日期，不代表论文的发表时间)</span>
<span class="t" id="en" style="left:584.32px;top:674.00px;font-size:17.5px;line-height:28.0px;color:#eba73a;letter-spacing:0.507px;">英文信息</span>
<span class="t" id="j1" style="left:1381.24px;top:203.92px;font-size:20px;line-height:32.0px;color:#333;letter-spacing:0.160px;font-weight:700;">现代护理医学杂志</span>
<span class="t" id="j2" style="left:1380.73px;top:249.00px;font-size:17.8px;line-height:28.48px;color:#333;letter-spacing:-0.330px;">ISSN</span>
<span class="t" id="j3" style="left:1420.54px;top:250.23px;font-size:17.5px;line-height:28.0px;color:#333;">：</span>
<span class="t" id="j4" style="left:1438.24px;top:248.00px;font-size:18.7px;line-height:29.92px;color:#333;letter-spacing:0.158px;">2753-6394</span>
<span class="t" id="j5" style="left:1380.88px;top:291.27px;font-size:17.5px;line-height:28.0px;color:#333;letter-spacing:0.119px;">年,卷(期)</span>
<span class="t" id="j6" style="left:1450.06px;top:292.00px;font-size:17.5px;line-height:28.0px;color:#333;">：</span>
<span class="t" id="j7" style="left:1467.26px;top:289.00px;font-size:18.7px;line-height:29.92px;color:#333;letter-spacing:-0.328px;">2025,4(8)</span>
<span class="t" id="r0" style="left:1182.35px;top:492.20px;font-size:20px;line-height:32.0px;color:#111;letter-spacing:0.156px;font-weight:700;">相关文献</span>
<span class="t" id="r1" style="left:1554.24px;top:493.00px;font-size:17.5px;line-height:28.0px;color:#2b65bb;letter-spacing:0.982px;">换一换</span>
<span class="t" id="m0" style="left:1213.38px;top:542.00px;font-size:18.7px;line-height:29.92px;color:#333;letter-spacing:-0.807px;">1.</span>
<span class="t" id="t0" style="left:1249.62px;top:544.00px;font-size:17.5px;line-height:28.0px;color:#333;letter-spacing:0.040px;">呼吸功能训练在肺实变患儿康复护理中的应...</span>
<span class="t" id="m1" style="left:1213.88px;top:617.00px;font-size:18.7px;line-height:29.92px;color:#333;letter-spacing:-1.242px;">2.</span>
<span class="t" id="t1" style="left:1249.62px;top:619.00px;font-size:17.5px;line-height:28.0px;color:#333;letter-spacing:0.040px;">呼吸训练联合康复训练对矽肺患者肺功能及...</span>
<span class="t" id="m2" style="left:1214.05px;top:692.00px;font-size:18.7px;line-height:29.92px;color:#333;letter-spacing:-1.377px;">3.</span>
<span class="t" id="t2" style="left:1249.88px;top:694.30px;font-size:17.5px;line-height:28.0px;color:#333;letter-spacing:0.025px;">渐进抗阻呼吸训练联合腹式呼吸训练在老年...</span>
<span class="t" id="m3" style="left:1214.43px;top:767.00px;font-size:18.7px;line-height:29.92px;color:#333;letter-spacing:-1.808px;">4.</span>
<span class="t" id="t3" style="left:1249.66px;top:769.00px;font-size:17.5px;line-height:28.0px;color:#333;letter-spacing:0.049px;">PERMA模式的护理干预联合综合呼吸功能锻...</span>
<span class="t" id="m4" style="left:1213.85px;top:842.00px;font-size:18.7px;line-height:29.92px;color:#333;letter-spacing:-1.207px;">5.</span>
<span class="t" id="t4" style="left:1249.62px;top:844.00px;font-size:17.5px;line-height:28.0px;color:#333;letter-spacing:0.040px;">呼吸训练康复护理模式联合有氧运动在尘肺...</span>
<span class="t" id="u00" style="left:1249.27px;top:580.53px;font-size:17.5px;line-height:28.0px;color:#a0a0a0;letter-spacing:0.466px;">李娇凤</span>
<span class="t" id="u01" style="left:1314.37px;top:580.64px;font-size:17.5px;line-height:28.0px;color:#a0a0a0;letter-spacing:1.764px;">等;</span>
<span class="t" id="u02" style="left:1348.47px;top:580.88px;font-size:17.5px;line-height:28.0px;color:#a0a0a0;letter-spacing:0.589px;">妇儿健康导刊</span>
<span class="t" id="u03" style="left:1460.08px;top:580.67px;font-size:17.5px;line-height:28.0px;color:#a0a0a0;">;</span>
<span class="t" id="u04" style="left:1470.83px;top:579.00px;font-size:18.7px;line-height:29.92px;color:#333;letter-spacing:0.114px;">2025</span>
<span class="t" id="u10" style="left:1249.39px;top:656.28px;font-size:17.5px;line-height:28.0px;color:#a0a0a0;letter-spacing:0.412px;">钱丽芳</span>
<span class="t" id="u11" style="left:1314.37px;top:655.64px;font-size:17.5px;line-height:28.0px;color:#a0a0a0;letter-spacing:1.764px;">等;</span>
<span class="t" id="u12" style="left:1347.46px;top:655.84px;font-size:17.5px;line-height:28.0px;color:#a0a0a0;letter-spacing:0.921px;">系统医学</span>
<span class="t" id="u13" style="left:1424.59px;top:655.94px;font-size:17.5px;line-height:28.0px;color:#a0a0a0;">;</span>
<span class="t" id="u14" style="left:1435.71px;top:654.00px;font-size:18.7px;line-height:29.92px;color:#333;letter-spacing:0.153px;">2025</span>
<span class="t" id="u20" style="left:1248.39px;top:730.67px;font-size:17.5px;line-height:28.0px;color:#a0a0a0;letter-spacing:0.881px;">罗燕妃;</span>
<span class="t" id="u21" style="left:1311.36px;top:730.70px;font-size:17.5px;line-height:28.0px;color:#a0a0a0;letter-spacing:0.304px;">黑龙江中医药</span>
<span class="t" id="u22" style="left:1422.08px;top:730.67px;font-size:17.5px;line-height:28.0px;color:#a0a0a0;">;</span>
<span class="t" id="u23" style="left:1433.26px;top:729.00px;font-size:18.7px;line-height:29.92px;color:#333;letter-spacing:0.080px;">2025</span>
<span class="t" id="u30" style="left:1249.33px;top:806.45px;font-size:17.5px;line-height:28.0px;color:#a0a0a0;letter-spacing:0.554px;">邝云杏</span>
<span class="t" id="u31" style="left:1314.37px;top:805.64px;font-size:17.5px;line-height:28.0px;color:#a0a0a0;letter-spacing:1.764px;">等;</span>
<span class="t" id="u32" style="left:1348.53px;top:805.72px;font-size:17.5px;line-height:28.0px;color:#a0a0a0;letter-spacing:0.344px;">护理实践与研究</span>
<span class="t" id="u33" style="left:1477.59px;top:805.94px;font-size:17.5px;line-height:28.0px;color:#a0a0a0;">;</span>
<span class="t" id="u34" style="left:1488.26px;top:804.00px;font-size:18.7px;line-height:29.92px;color:#333;letter-spacing:0.080px;">2025</span>

<div id="vsb">
  <div class="tri" style="left:3px;top:8px;border-left:6.5px solid transparent;border-right:6.5px solid transparent;border-bottom:7px solid #8b8b8b"></div>
  <div class="thumb" style="left:4px;top:22.8px;width:11px;height:216px"></div>
  <div class="tri" style="left:3px;top:865px;border-left:6.5px solid transparent;border-right:6.5px solid transparent;border-top:7px solid #8b8b8b"></div>
</div>
<div id="hsb">
  <div class="tri" style="left:6.7px;top:3px;border-top:6.5px solid transparent;border-bottom:6.5px solid transparent;border-right:7.5px solid #8b8b8b"></div>
  <div class="thumb" style="left:22.7px;top:4px;width:1686.3px;height:10.7px"></div>
  <div class="tri" style="left:1750.8px;top:3px;border-top:6.5px solid transparent;border-bottom:6.5px solid transparent;border-left:7.5px solid #8b8b8b"></div>
</div>
</body>
</html>
